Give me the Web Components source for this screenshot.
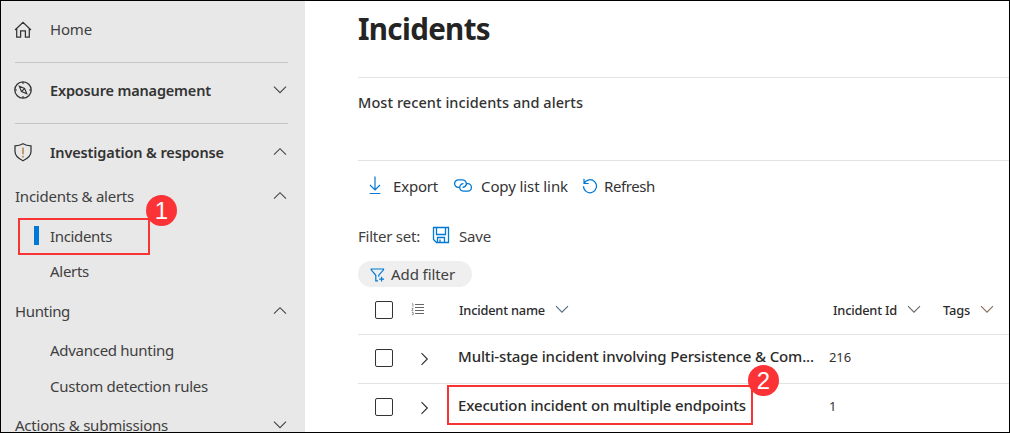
<!DOCTYPE html>
<html lang="en"><head><meta charset="utf-8"><title>Incidents</title>
<style>
html,body{margin:0;height:100%;overflow:hidden;background:#fff}
body{font-family:"Noto Sans","Open Sans",sans-serif;font-size:15px;color:#333}
</style></head><body>
<incidents-app></incidents-app>
<script>
const define=(name,html,extra)=>customElements.define(name,class extends HTMLElement{
  constructor(){super();this.attachShadow({mode:'open'}).innerHTML=html;}
  connectedCallback(){if(extra)extra(this,this.shadowRoot);}
});

// Single-line label; "w" is its advance width, reached by tracking.
define('fit-text','<style>:host{display:block;white-space:pre;line-height:20px;flex:none;transform:translate(1px,-1px)}span{display:inline-block}</style><span><slot></slot></span>',(el,r)=>{
  const s=r.querySelector('span'),w=+el.getAttribute('w');
  const n=el.textContent.length;
  if(w&&n){s.style.letterSpacing=((w-1-s.getBoundingClientRect().width)/n)+'px';el.style.width=w+'px';}
});

const icons={
home:[18,18,'<path d="M1 9 9 1.300l8 7.700M2.700 7.700v8.300h3.900V9.800h4.800V16h3.900V7.700" stroke-width="1.250"/>'],
compass:[19,19,'<circle cx="9" cy="9" r="8.200" stroke-width="1.300"/><path d="M5.300 5.300l5.300 2.200 2.200 5.300-5.300-2.200zM7.700 10.400l2.800-2.800M9 1v1.900M9 15.100v1.900M1 9h1.900M15.100 9h1.900"/>'],
shield:[19,19,'<path d="M9 .8c2.500 1.500 5 2 8 2v5.800c0 4-3 6.900-8 9.200-5-2.300-8-5.200-8-9.200V2.800c3 0 5.500-.5 8-2z" stroke-width="1.250"/><path d="M9 4.500v6.800M9 12.700v1.900" stroke="#b5702c" stroke-width="1.300"/>'],
down:[14,9,'<path d="M1 1.200 7 7.200l6-6"/>'],
up:[14,9,'<path d="M1 7.200 7 1.200l6 6"/>'],
right:[9,14,'<path d="M1.500 1.200 7.300 7 1.500 12.800"/>'],
download:[14,19,'<path d="M7 .5v13.300M2 9l5 5 5-5M1.700 17.500h10.600" stroke-width="1.200"/>'],
link:[20,15,'<path d="M6.500 9.300H5.300A3.700 3.700 0 0 1 5.300 1.900h4.400a3.700 3.700 0 0 1 2.500 6.400c-.7.700-1.600 1-2.700 1M13.500 5.700h1.200a3.700 3.700 0 0 1 0 7.400h-4.400a3.700 3.700 0 0 1-2.500-6.400c.7-.7 1.600-1 2.700-1" stroke-width="1.300"/>'],
refresh:[16,16,'<path d="M2 .8v4.700h4.700M2.200 5.300A6.500 6.500 0 1 1 1.500 8.300" stroke-width="1.200"/>'],
save:[18,18,'<path d="M1.500 1.500h15v15h-12l-3-3zM4.500 1.500v7h9v-7M5.500 16.500v-5h7v5M8 16.500V13.500" stroke-width="1.300"/>'],
filter:[15,15,'<path d="M8 12.800H5.800V7.300L1.200 1.800V1h12.300v.8L8.800 7.200v1.500M11.600 8.800v4.800M9.200 11.200H14" stroke-width="1.200"/>'],
list:[14,13,'<path d="M4 1.500H13M4 4.500H13M4 7.500H13M4 10.500H13" shape-rendering="crispEdges"/><path d="M1 .8h1v3M.7 5.300h1.500L.8 7.600h1.500M.8 9.300h1.400v2.400H.8" stroke-width=".7"/>']
};
define('ui-icon','<style>:host{display:block;flex:none}svg{display:block;overflow:visible}</style>',(el,r)=>{
  const [w,h,p]=icons[el.getAttribute('name')];
  r.innerHTML+=`<svg width="${w}" height="${h}" viewBox="0 0 ${w} ${h}" fill="none" stroke="currentColor" stroke-width="1.100">${p}</svg>`;
});

define('step-badge','<style>:host{position:absolute;width:31px;height:31px;border-radius:50%;background:#fb3336;color:#fff;font:24px/31px "Liberation Sans",Arial,sans-serif;text-align:center;z-index:2}</style><slot></slot>');
define('check-box','<style>:host{display:block;box-sizing:border-box;width:18px;height:18px;border:1px solid #333;border-radius:2px;flex:none;transform:translateY(-1px)}</style>');
define('nav-divider','<style>:host{display:block;height:1px;background:#c5c5c5;margin:0 17px 0 14px;flex:none}</style>');
define('nav-item',`<style>
:host{display:flex;align-items:center;position:relative;flex:none;box-sizing:border-box;padding:0 18px 0 13px;color:#404040}
:host([bold]){font-weight:600;font-size:14.500px;color:#333}
.ic{width:35px;display:flex;color:#333}:host([top]) .ic{display:none}
.end{margin-left:auto;color:#444;display:flex;transform:translateY(-.5px)}
</style><div class="ic"><slot name="icon"></slot></div><slot></slot><div class="end"><slot name="end"></slot></div>`);
define('selected-item',`<style>
:host{display:flex;align-items:center;position:relative;flex:none;box-sizing:border-box;width:132px;height:37px;margin:6px 0 0 17px;border:2px solid #f93434;color:#404040}
.bar{width:5px;height:19px;background:#0078d4;margin:0 10px 0 14px;transform:translateY(-1px)}
step-badge{left:126px;top:-25px}
</style><div class="bar"></div><slot></slot><step-badge>1</step-badge>`);

define('side-nav',`<style>
:host{display:flex;flex-direction:column;box-sizing:border-box;width:304px;height:431px;overflow:hidden;background:#e8e8e8;flex:none}
</style>
<nav-item style="height:57px;margin-bottom:4px"><ui-icon slot="icon" name="home"></ui-icon><fit-text w="43">Home</fit-text></nav-item>
<nav-divider></nav-divider>
<nav-item bold style="height:55px;margin-bottom:5px"><ui-icon slot="icon" name="compass"></ui-icon><fit-text w="162">Exposure management</fit-text><ui-icon slot="end" name="down"></ui-icon></nav-item>
<nav-divider></nav-divider>
<nav-item bold style="height:57px"><ui-icon slot="icon" name="shield"></ui-icon><fit-text w="175">Investigation &amp; response</fit-text><ui-icon slot="end" name="up"></ui-icon></nav-item>
<nav-item top style="height:31px"><fit-text w="120">Incidents &amp; alerts</fit-text><ui-icon slot="end" name="up"></ui-icon></nav-item>
<selected-item><fit-text w="63">Incidents</fit-text></selected-item>
<nav-item style="height:33px"><fit-text w="40">Alerts</fit-text></nav-item>
<nav-item top style="height:33px;margin-top:7px"><fit-text w="56">Hunting</fit-text><ui-icon slot="end" name="up"></ui-icon></nav-item>
<nav-item style="height:34px;margin-top:6px"><fit-text w="125">Advanced hunting</fit-text></nav-item>
<nav-item style="height:35px;margin-top:1px"><fit-text w="159">Custom detection rules</fit-text></nav-item>
<nav-item top style="height:31px;margin-top:6px"><fit-text w="154">Actions &amp; submissions</fit-text><ui-icon slot="end" name="down"></ui-icon></nav-item>`);

define('tool-bar',`<style>
:host{display:flex;align-items:center;height:51px;color:#333}
ui-icon{color:#0078d4}
</style>
<ui-icon name="download" style="margin:0 10px 0 10px;transform:translateY(-1px)"></ui-icon><fit-text w="46">Export</fit-text>
<ui-icon name="link" style="margin:0 7px 0 15px;transform:translateY(-1px)"></ui-icon><fit-text w="88">Copy list link</fit-text>
<ui-icon name="refresh" style="margin:0 5px 0 14px;transform:translateY(-1px)"></ui-icon><fit-text w="52">Refresh</fit-text>`);
define('filter-bar',`<style>
:host{display:block;color:#404040}
.set{display:flex;align-items:center;height:49px}
.pill{display:flex;align-items:center;width:114px;height:26px;border-radius:13px;background:#efefef}
ui-icon{color:#0078d4}
</style><div class="set"><fit-text w="63" style="margin-left:-1px">Filter set:</fit-text><ui-icon name="save" style="margin:0 8px 0 12px;transform:translateY(-2px)"></ui-icon><fit-text w="33">Save</fit-text></div>
<div class="pill"><ui-icon name="filter" style="margin:0 5px 0 12px;transform:translateY(1px)"></ui-icon><fit-text w="65" style="padding-top:1px">Add filter</fit-text></div>`);

define('table-row',`<style>
:host{display:grid;grid-template-columns:53px 47px 370px 1fr;align-items:center;box-sizing:border-box;height:49px;border-bottom:1px solid #e3e3e3;position:relative;color:#2b2b2b}
check-box{margin-left:17px}.x{padding-left:9px}
.n{font-weight:500;font-size:15px;transform:translateY(-2px);margin-left:-1px}.i{font-size:13px;transform:translateY(-1px);color:#333}
</style><check-box></check-box><div class="x"><ui-icon name="right"></ui-icon></div><div class="n"><slot></slot></div><div class="i"><slot name="id"></slot></div><slot name="mark"></slot>`);
define('mark-box',`<style>:host{position:absolute;left:89px;top:1px;width:306px;height:40px;box-sizing:border-box;border:2px solid #f93434}
step-badge{left:299px;top:-22px}</style><step-badge><slot></slot></step-badge>`);
define('table-head',`<style>
:host{display:grid;grid-template-columns:53px 47px 374px 110px 1fr;align-items:center;box-sizing:border-box;height:48px;border-bottom:1px solid #e3e3e3;font-weight:500;font-size:12.800px;color:#2b2b2b}
check-box{margin-left:17px}.c{display:flex;align-items:center}ui-icon{color:#666}.c ui-icon{transform:translateY(-1px)}
</style><check-box></check-box><ui-icon name="list" style="transform:translateY(-1px)"></ui-icon>
<div class="c"><fit-text w="87">Incident name</fit-text><ui-icon name="down" style="margin-left:10px;color:#4f6b80"></ui-icon></div>
<div class="c"><fit-text w="65">Incident Id</fit-text><ui-icon name="down" style="margin-left:10px"></ui-icon></div>
<div class="c"><fit-text w="28">Tags</fit-text><ui-icon name="down" style="margin-left:10px;color:#8a6a58"></ui-icon></div>`);

define('incidents-main',`<style>
:host{display:block;width:651px;height:431px;margin-left:53px;overflow:hidden}
h1{margin:0;height:76px;box-sizing:border-box;padding-top:8px;font-size:29.500px;font-weight:700;color:#242424}
h1 fit-text{line-height:42px;margin-left:-1px}
h2{margin:0;height:83px;box-sizing:border-box;padding-top:15px;font-size:14.500px;font-weight:500;border-top:1px solid #e3e3e3;border-bottom:0;color:#333}
h2 fit-text{margin-left:-1px}
tool-bar{border-top:1px solid #e3e3e3}
</style>
<h1><fit-text w="133">Incidents</fit-text></h1>
<h2><fit-text w="226">Most recent incidents and alerts</fit-text></h2>
<tool-bar></tool-bar><filter-bar></filter-bar>
<table-head></table-head>
<table-row><fit-text w="357">Multi-stage incident involving Persistence &amp; Com...</fit-text><fit-text slot="id" w="23">216</fit-text></table-row>
<table-row><fit-text w="289">Execution incident on multiple endpoints</fit-text><fit-text slot="id" w="9">1</fit-text><mark-box slot="mark">2</mark-box></table-row>`);
define('incidents-app',`<style>:host{display:flex;box-sizing:border-box;width:1010px;height:433px;border:1px solid #000;background:#fff;overflow:hidden}</style><side-nav></side-nav><incidents-main></incidents-main>`);
</script></body></html>
